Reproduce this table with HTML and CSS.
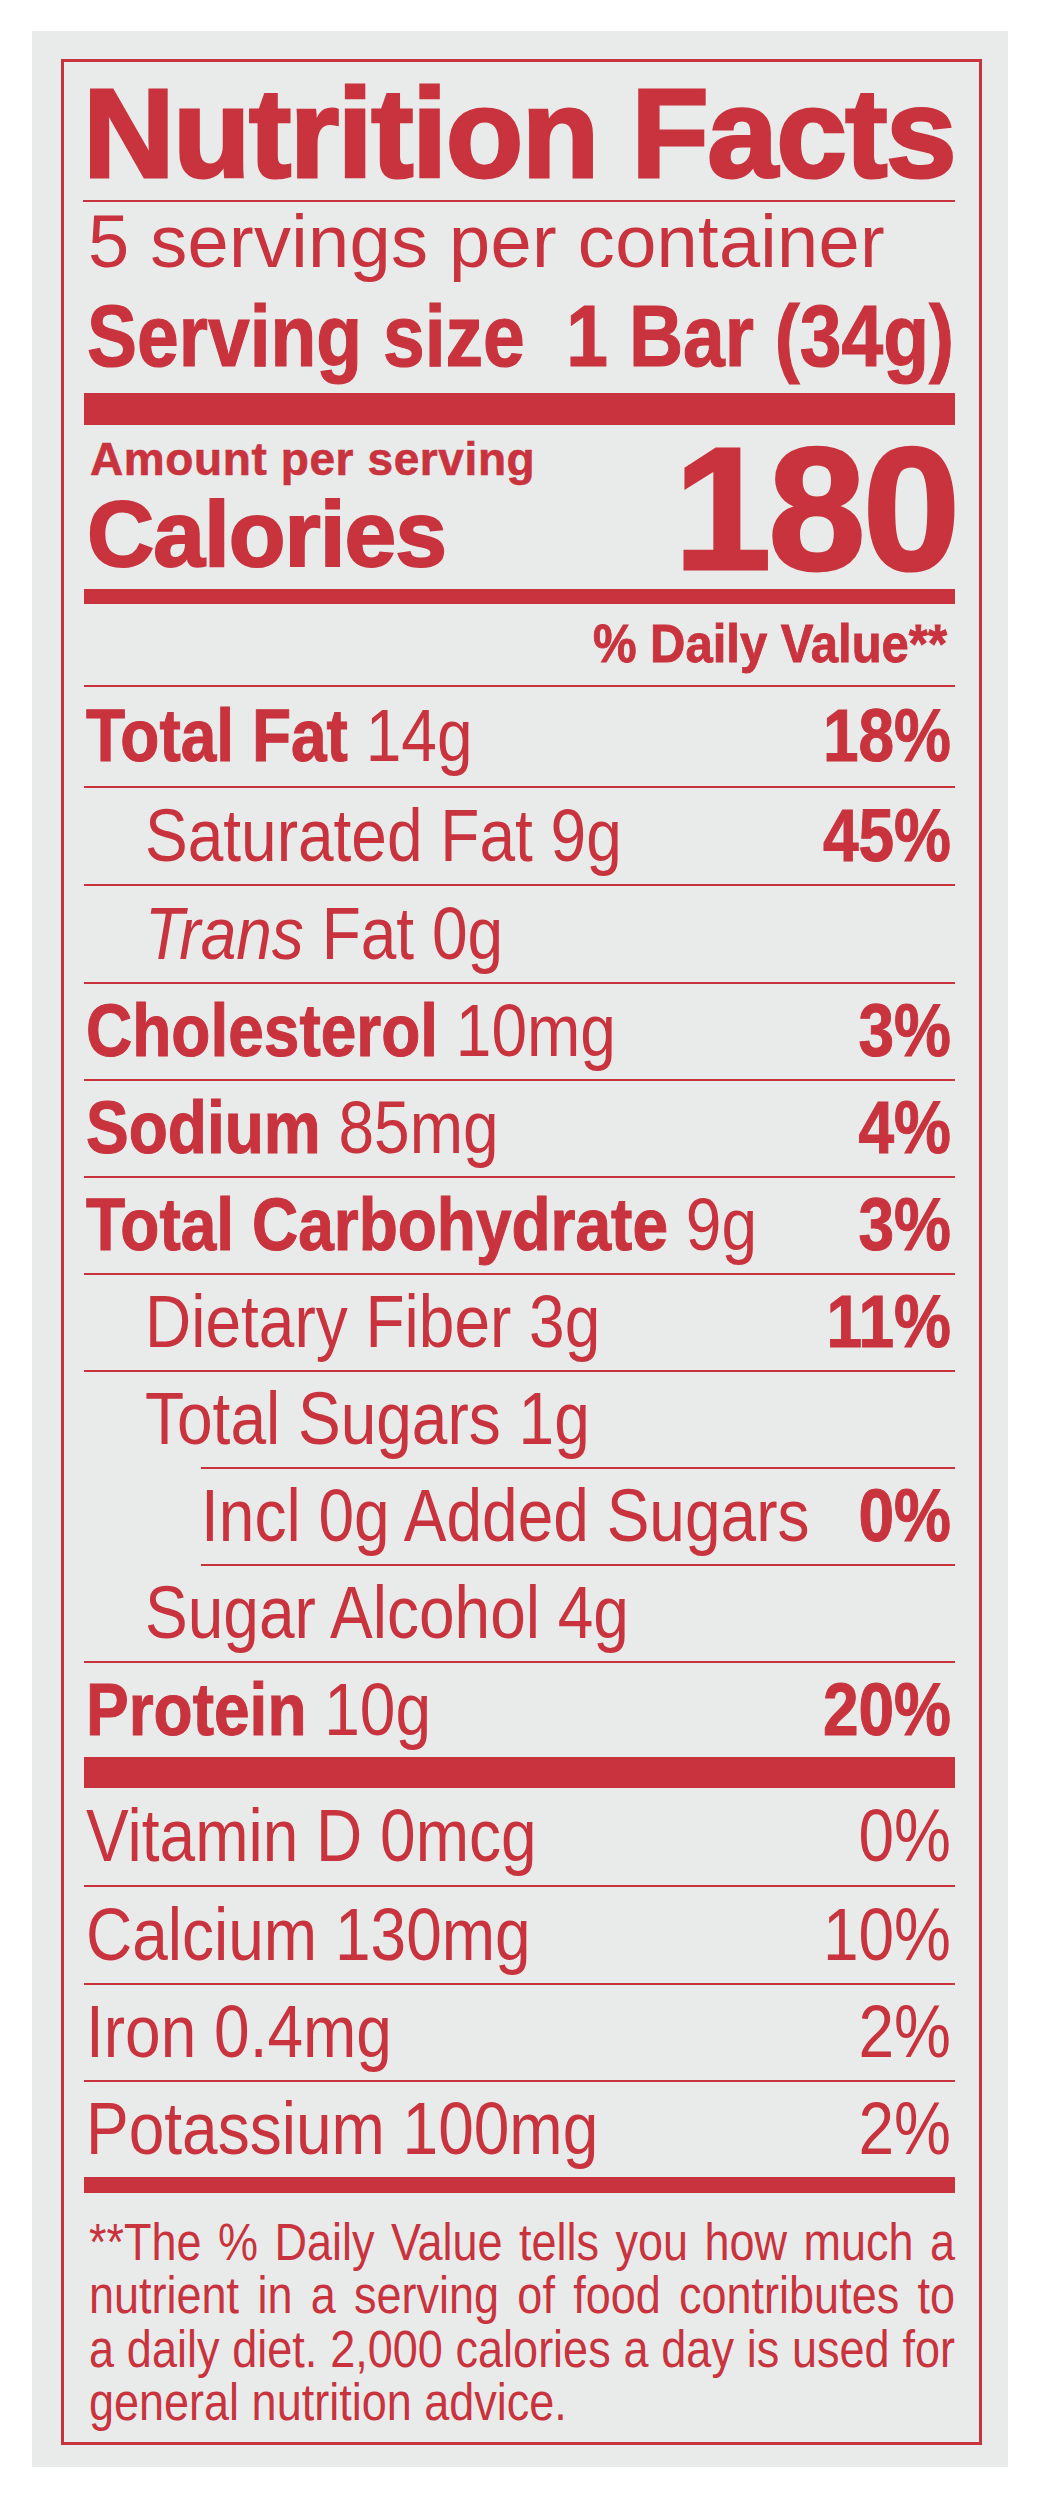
FILE: index.html
```html
<!DOCTYPE html>
<html lang="en">
<head>
<meta charset="utf-8">
<title>Nutrition Facts</title>
<link rel="stylesheet" href="styles.css">
</head>
<body>
<div class="panel">
  <section class="label">
    <h1 class="title">Nutrition Facts</h1>
    <p class="servings">5 servings per container</p>
    <p class="size"><span class="cond">Serving size&nbsp; 1 Bar (34g)</span></p>
    <div class="bar bar-xl"></div>
    <div class="cal">
      <div class="cal-left">
        <div class="amount">Amount per serving</div>
        <div class="calories">Calories</div>
      </div>
      <div class="cal-num">180</div>
    </div>
    <div class="bar bar-md"></div>
    <div class="dv"><span>% Daily Value**</span></div>
    <div class="facts">
      <div class="row row-fat"><span><b>Total Fat</b> 14g</span><b>18%</b></div>
      <div class="row row-tall sub"><span>Saturated Fat 9g</span><b>45%</b></div>
      <div class="row row-tall sub"><span><i>Trans</i> Fat 0g</span></div>
      <div class="row"><span><b>Cholesterol</b> 10mg</span><b>3%</b></div>
      <div class="row"><span><b>Sodium</b> 85mg</span><b>4%</b></div>
      <div class="row"><span><b>Total Carbohydrate</b> 9g</span><b>3%</b></div>
      <div class="row sub"><span>Dietary Fiber 3g</span><b>11%</b></div>
      <div class="row sub nob"><span>Total Sugars 1g</span></div>
      <div class="row incl"><span>Incl 0g Added Sugars</span><b>0%</b></div>
      <div class="row sub"><span>Sugar Alcohol 4g</span></div>
      <div class="row row-end"><span><b>Protein</b> 10g</span><b>20%</b></div>
      <div class="bar bar-lg"></div>
      <div class="row row-vit"><span>Vitamin D 0mcg</span><span>0%</span></div>
      <div class="row row-tall"><span>Calcium 130mg</span><span>10%</span></div>
      <div class="row"><span>Iron 0.4mg</span><span>2%</span></div>
      <div class="row nob"><span>Potassium 100mg</span><span>2%</span></div>
      <div class="bar bar-sm"></div>
    </div>
    <div class="foot">
      <span class="fl">**The % Daily Value tells you how much a</span>
      <span class="fl">nutrient in a serving of food contributes to</span>
      <span class="fl">a daily diet. 2,000 calories a day is used for</span>
      <span class="fl fl-end">general nutrition advice.</span>
    </div>
  </section>
</div>
</body>
</html>
```

FILE: styles.css
```css
* { box-sizing: border-box; margin: 0; padding: 0; }
html, body { background: #ffffff; }
body {
  font-family: "Liberation Sans", Arial, Helvetica, sans-serif;
  color: #c8333e;
}
.panel {
  width: 976px;
  margin: 31px 0 0 32px;
  background: #e9ebea;
  padding: 28px 26px 22px 29px;
}
.label {
  width: 921px;
  border: 3px solid #c8333e;
  padding: 8px 24px 13px 20px;
}
.title {
  font-size: 127px;
  line-height: 127px;
  font-weight: 700;
  letter-spacing: -1.6px;
  margin-left: -1px;
  padding-bottom: 3px;
  border-bottom: 2px solid #c8333e;
  white-space: nowrap;
  -webkit-text-stroke: 3px #c8333e;
}
.servings {
  font-size: 74px;
  line-height: 74px;
  margin-top: 3px;
  padding-left: 4px;
  letter-spacing: 0.3px;
  white-space: nowrap;
}
.size {
  margin-top: 13px;
  padding: 0 0 13px 3px;
  font-size: 75px;
  line-height: 88px;
  height: 101px;
  font-weight: 700;
  white-space: nowrap;
}
.cond {
  display: inline-block;
  transform: translateY(4px) scaleY(1.17);
  transform-origin: 0 80%;
  -webkit-text-stroke: 1px #c8333e;
}
.bar { background: #c8333e; }
.bar-xl { height: 32px; }
.bar-lg { height: 31px; }
.bar-md { height: 15px; }
.bar-sm { height: 16px; }
.cal {
  display: flex;
  justify-content: space-between;
  height: 164px;
}
.cal-left { padding-top: 11px; }
.amount {
  font-size: 46px;
  line-height: 46px;
  font-weight: 700;
  letter-spacing: 0.6px;
  padding-left: 6px;
  white-space: nowrap;
  -webkit-text-stroke: 0.6px #c8333e;
}
.calories {
  margin-top: 6px;
  font-size: 93px;
  line-height: 93px;
  font-weight: 700;
  letter-spacing: -1px;
  padding-left: 3px;
  -webkit-text-stroke: 2px #c8333e;
}
.cal-num {
  align-self: flex-end;
  font-size: 175px;
  line-height: 160px;
  font-weight: 700;
  letter-spacing: -3px;
  margin-right: -2px;
  -webkit-text-stroke: 3px #c8333e;
}
.dv {
  padding: 14px 8px 14px 0;
  border-bottom: 2px solid #c8333e;
  text-align: right;
  font-size: 49px;
  line-height: 53px;
  font-weight: 700;
  white-space: nowrap;
}
.dv span {
  display: inline-block;
  transform: translateY(1px) scaleY(1.087);
  transform-origin: 100% 82%;
  -webkit-text-stroke: 0.8px #c8333e;
}
.facts { font-size: 64px; }
.row {
  display: flex;
  justify-content: space-between;
  line-height: 95px;
  border-bottom: 2px solid #c8333e;
  padding: 0 4px 0 2px;
  white-space: nowrap;
}
.row > * {
  transform: translateY(3px) scaleY(1.156);
  transform-origin: 0 73%;
}
.row b {
  font-weight: 700;
  -webkit-text-stroke: 0.9px #c8333e;
}
.row i { font-style: italic; }
.row-fat { line-height: 99px; }
.row-tall { line-height: 96px; }
.row-vit { line-height: 97px; }
.row-end { line-height: 94px; border-bottom: 0; }
.sub { padding-left: 61px; }
.nob { border-bottom: 0; }
.incl {
  margin-left: 117px;
  padding-left: 0;
  border-top: 2px solid #c8333e;
}
.foot {
  width: 866px;
  margin-left: 5px;
  padding-top: 23px;
  font-size: 45px;
  line-height: 53.3px;
}
.fl {
  display: block;
  text-align: justify;
  text-align-last: justify;
  white-space: nowrap;
  transform: translateY(2px) scaleY(1.133);
  transform-origin: 0 79%;
}
.fl-end { text-align-last: left; }
```
